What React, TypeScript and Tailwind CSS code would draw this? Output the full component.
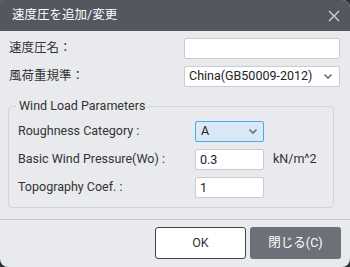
import { useState } from 'react';

const font = { fontFamily: 'Roboto, "Noto Sans CJK JP", sans-serif' };

function Chevron({ className = '' }: { className?: string }) {
  return (
    <svg width="10" height="7" viewBox="0 0 10 7" className={className}>
      <path d="M1.5 1.5 L5 5 L8.5 1.5" fill="none" stroke="#6b7078" strokeWidth="1.6" />
    </svg>
  );
}

export default function App() {
  const [name, setName] = useState('');
  const [wo, setWo] = useState('0.3');
  const [topo, setTopo] = useState('1');

  const field = 'h-[21px] bg-white border border-[#c9ccd2] rounded-[2px] px-1 text-[12.5px] text-[#222] outline-none';

  return (
    <div className="w-[350px] h-[267px] bg-[#2e3338]" style={font}>
      <div className="w-full h-full flex flex-col bg-[#e9eaee] rounded-t-[8px] rounded-b-[8px] rounded-tl-[3px] overflow-hidden">
        {/* header */}
        <div className="h-[31px] flex items-center justify-between pl-3 pr-[10px] bg-[#535860] shrink-0">
          <span className="text-[12.5px] text-white">速度圧を追加/変更</span>
          <svg width="12" height="12" viewBox="0 0 12 12">
            <path d="M1 1 L11 11 M11 1 L1 11" stroke="#d7d9dc" strokeWidth="1.2" />
          </svg>
        </div>

        {/* body */}
        <div className="flex-1 flex flex-col px-2 pt-[7px] text-[#333]">
          <div className="flex items-center justify-between h-[21px] mb-[7px]">
            <span className="text-[12.5px] pl-px">速度圧名：</span>
            <input value={name} onChange={(e) => setName(e.target.value)} className={`${field} w-[156px] mr-[2px]`} />
          </div>
          <div className="flex items-center justify-between h-[21px]">
            <span className="text-[12.5px] pl-px">風荷重規準：</span>
            <div className={`${field} w-[156px] mr-[2px] flex items-center justify-between pr-[6px]`}>
              <span>China(GB50009-2012)</span>
              <Chevron />
            </div>
          </div>

          {/* group */}
          <div className="relative mt-[19px] w-[326px] h-[102px] border border-[#d2d4d9] rounded-[4px] px-[9px] pt-[14px]">
            <span className="absolute -top-[9px] left-[7px] px-[3px] bg-[#e9eaee] text-[12.5px] leading-[16px]">
              Wind Load Parameters
            </span>
            <div className="flex items-center h-[21px]">
              <span className="w-[177px] text-[12.5px]">Roughness Category :</span>
              <div className="w-[69px] h-[21px] flex items-center justify-between px-[5px] bg-[#dbe8f8] border border-[#3fb0e8] rounded-[2px] text-[12.5px] text-[#222]">
                <span>A</span>
                <Chevron />
              </div>
            </div>
            <div className="flex items-center h-[21px] mt-[7px]">
              <span className="w-[177px] text-[12.5px]">Basic Wind Pressure(Wo) :</span>
              <input value={wo} onChange={(e) => setWo(e.target.value)} className={`${field} w-[69px]`} />
              <span className="ml-[9px] text-[12.5px]">kN/m^2</span>
            </div>
            <div className="flex items-center h-[21px] mt-[7px]">
              <span className="w-[177px] text-[12.5px]">Topography Coef. :</span>
              <input value={topo} onChange={(e) => setTopo(e.target.value)} className={`${field} w-[69px]`} />
            </div>
          </div>
        </div>

        {/* footer */}
        <div className="h-[48px] shrink-0 border-t border-[#c6c8cd] flex items-start justify-end gap-[4px] pt-[7px] pr-[9px]">
          <button className="w-[91px] h-[32px] bg-white border border-[#3d424a] rounded-[3px] text-[12.5px] text-[#333]">OK</button>
          <button className="w-[91px] h-[32px] bg-[#6c7179] rounded-[3px] text-[12.5px] text-white">閉じる(C)</button>
        </div>
      </div>
    </div>
  );
}
